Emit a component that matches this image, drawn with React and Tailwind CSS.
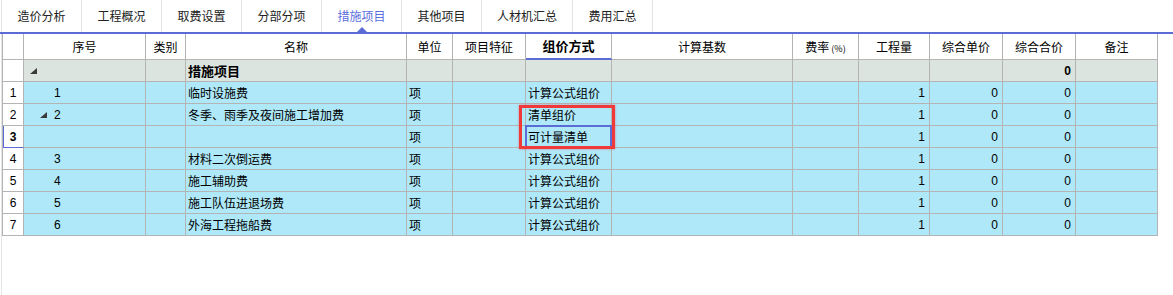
import React from 'react';

const tabs = ['造价分析', '工程概况', '取费设置', '分部分项', '措施项目', '其他项目', '人材机汇总', '费用汇总'];

const headers = ['', '序号', '类别', '名称', '单位', '项目特征', '组价方式', '计算基数', '费率', '工程量', '综合单价', '综合合价', '备注'];

const rows = [
  { n: '1', seq: '1', name: '临时设施费', method: '计算公式组价' },
  { n: '2', seq: '2', tri: true, name: '冬季、雨季及夜间施工增加费', method: '清单组价' },
  { n: '3', seq: '', name: '', method: '可计量清单', sel: true },
  { n: '4', seq: '3', name: '材料二次倒运费', method: '计算公式组价' },
  { n: '5', seq: '4', name: '施工辅助费', method: '计算公式组价' },
  { n: '6', seq: '5', name: '施工队伍进退场费', method: '计算公式组价' },
  { n: '7', seq: '6', name: '外海工程拖船费', method: '计算公式组价' },
];

const cols = 'grid grid-cols-[21px_122px_40px_221px_46px_73px_86px_181px_66px_71px_73px_73px_82px]';
const cell = 'border-r border-b border-[#b4b4b4] flex items-center overflow-hidden whitespace-nowrap';
const cjk = { fontFamily: '"Noto Sans CJK SC", "Noto Sans", sans-serif' };
const num = { fontFamily: '"Liberation Sans", Arial, sans-serif' };

const Tri = ({ className = '' }) => (
  <svg width="7" height="6" viewBox="0 0 7 6" className={className}>
    <polygon points="7,0 7,6 0,6" fill="#3a3a3a" />
  </svg>
);

export default function App() {
  return (
    <div className="w-[1173px] h-[295px] bg-white flex flex-col text-black" style={cjk}>
      {/* Tabs */}
      <div className="h-[32px] flex pl-[1px]">
        <div className="flex border-l border-[#e4e4e4]">
          {tabs.map((t) => {
            const active = t === '措施项目';
            return (
              <div
                key={t}
                className={`relative ${t === '人材机汇总' ? 'w-[91px]' : 'w-[80px]'} h-full border-r border-[#e4e4e4] flex items-center justify-center text-[12px] ${active ? 'text-[#5b6ee0]' : 'text-[#222]'}`}
              >
                {t}
                {active && (
                  <div className="absolute bottom-0 left-1/2 -translate-x-1/2 w-0 h-0 border-l-[5px] border-r-[5px] border-b-[5px] border-l-transparent border-r-transparent border-b-[#5b6cd4]" />
                )}
              </div>
            );
          })}
        </div>
      </div>
      <div className="h-[2px] bg-[#5b6cd4]" />

      {/* Grid */}
      <div className="flex-1 pl-[1px]">
        <div className="h-full border-l border-[#e4e4e4]">
          <div className="relative w-[1155px] border-l border-[#b4b4b4]">
            {/* header */}
            <div className={`${cols} h-[26px] text-[12px]`}>
              {headers.map((h, i) => (
                <div key={i} className={`${cell} justify-center ${i === 6 ? 'font-bold text-[13px] border-b-2 border-b-[#5b6cd4]' : ''}`}>
                  {i === 8 ? (
                    <span>
                      费率<span className="text-[9px] ml-[2px]">(%)</span>
                    </span>
                  ) : (
                    h
                  )}
                </div>
              ))}
            </div>

            {/* group row */}
            <div className={`${cols} h-[22px] text-[12px]`}>
              <div className={`${cell} bg-white`} />
              <div className={`${cell} bg-[#dbe4df] pl-[6px]`}>
                <Tri />
              </div>
              <div className={`${cell} bg-[#dbe4df]`} />
              <div className={`${cell} bg-[#dbe4df] pl-[2px] font-bold text-[13px]`}>措施项目</div>
              {[4, 5, 6, 7, 8, 9, 10].map((i) => (
                <div key={i} className={`${cell} bg-[#dbe4df]`} />
              ))}
              <div className={`${cell} bg-[#dbe4df] justify-end pr-[4px] font-bold text-[12px]`} style={num}>0</div>
              <div className={`${cell} bg-[#dbe4df]`} />
            </div>

            {/* data rows */}
            {rows.map((r) => (
              <div key={r.n} className={`${cols} h-[22px] text-[12px]`}>
                <div
                  className={`${cell} bg-white justify-center text-[12px] ${r.sel ? 'font-bold border-b-[#5b6cd4] shadow-[inset_1px_0_0_#5b6cd4]' : ''}`}
                  style={num}
                >
                  {r.n}
                </div>
                <div className={`${cell} bg-[#aee8f9] text-[12px]`} style={num}>
                  {r.tri ? (
                    <>
                      <Tri className="ml-[16px] mr-[7px]" />
                      {r.seq}
                    </>
                  ) : (
                    <span className="ml-[30px]">{r.seq}</span>
                  )}
                </div>
                <div className={`${cell} bg-[#aee8f9]`} />
                <div className={`${cell} bg-[#aee8f9] pl-[2px]`}>{r.name}</div>
                <div className={`${cell} bg-[#aee8f9] pl-[2px]`}>项</div>
                <div className={`${cell} bg-[#aee8f9]`} />
                <div className={`${cell} bg-[#aee8f9] pl-[2px]`}>{r.method}</div>
                <div className={`${cell} bg-[#aee8f9]`} />
                <div className={`${cell} bg-[#aee8f9]`} />
                <div className={`${cell} bg-[#aee8f9] justify-end pr-[4px]`} style={num}>1</div>
                <div className={`${cell} bg-[#aee8f9] justify-end pr-[4px]`} style={num}>0</div>
                <div className={`${cell} bg-[#aee8f9] justify-end pr-[4px]`} style={num}>0</div>
                <div className={`${cell} bg-[#aee8f9]`} />
              </div>
            ))}

            {/* selected cell + highlight box */}
            <div className="absolute left-[522px] top-[91px] w-[87px] h-[23px] border-2 border-[#5b6cd4] pointer-events-none" />
            <div className="absolute left-[516px] top-[71px] w-[96px] h-[44px] border-[3px] border-[#f03a3a] shadow-[0_0_2px_rgba(240,60,60,0.6)] pointer-events-none" />
          </div>
        </div>
      </div>
    </div>
  );
}
